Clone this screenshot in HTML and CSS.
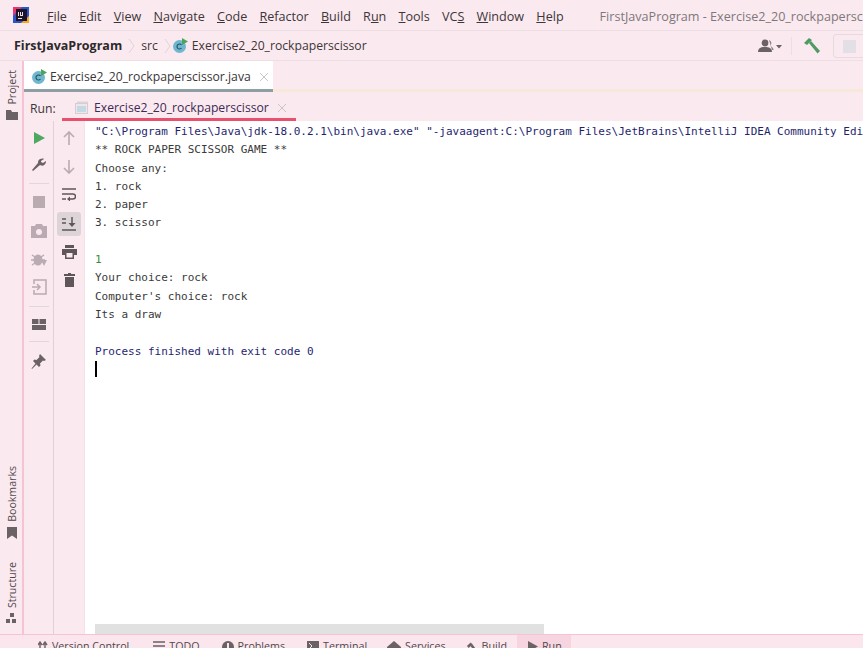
FILE: index.html
```html
<!DOCTYPE html>
<html lang="en">
<head>
    <meta charset="UTF-8">
    <title>FirstJavaProgram - Exercise2_20_rockpaperscissor</title>
    <link rel="stylesheet" href="styles.css">
</head>
<body>
    <div class="menubar">
        <svg class="logo" width="16" height="16" viewBox="0 0 16 16">
            <rect width="16" height="16" fill="#2b55c9"/>
            <path d="M0 0h9L0 9z" fill="#e8366f"/>
            <path d="M16 16H8l8-7z" fill="#f7a823"/>
            <rect x="3" y="2" width="11" height="12" fill="#1a1626"/>
            <rect x="5" y="5" width="1" height="4" fill="#f3d9e6"/>
            <rect x="7" y="5" width="3" height="4" fill="#f3d9e6"/>
            <rect x="8" y="5" width="1" height="3" fill="#1a1626"/>
            <rect x="5" y="11" width="4" height="1" fill="#f3d9e6"/>
        </svg>
        <nav class="menu">
            <span><u>F</u>ile</span>
            <span><u>E</u>dit</span>
            <span><u>V</u>iew</span>
            <span><u>N</u>avigate</span>
            <span><u>C</u>ode</span>
            <span><u>R</u>efactor</span>
            <span><u>B</u>uild</span>
            <span>R<u>u</u>n</span>
            <span><u>T</u>ools</span>
            <span>VC<u>S</u></span>
            <span><u>W</u>indow</span>
            <span><u>H</u>elp</span>
        </nav>
        <div class="title">FirstJavaProgram - Exercise2_20_rockpaperscissor</div>
    </div>

    <div class="navbar">
        <div class="crumbs">
            <b>FirstJavaProgram</b>
            <svg class="chev" width="7" height="16" viewBox="0 0 7 16"><path d="M1 1l5 7-5 7" fill="none" stroke="#dfd3d8"/></svg>
            <span>src</span>
            <svg class="chev" width="7" height="16" viewBox="0 0 7 16"><path d="M1 1l5 7-5 7" fill="none" stroke="#dfd3d8"/></svg>
            <svg class="crumb-icon" width="16" height="16" viewBox="0 0 16 16"><circle cx="7.500" cy="8.500" r="6.500" fill="#6fb6cf"/><path d="M9.500 7a2.500 2.500 0 1 0 0 3" fill="none" stroke="#25505f" stroke-width="1.100"/><path d="M10 0l6 3.500-6 3.500z" fill="#4fa35c"/></svg>
            <span class="crumb-file">Exercise2_20_rockpaperscissor</span>
        </div>
        <div class="nav-actions">
            <svg width="26" height="14" viewBox="0 0 26 14"><circle cx="9" cy="4" r="3.400" fill="#6b6266"/><path d="M2 13c0-4 3-5 7-5s7 1 7 5z" fill="#6b6266"/><path d="M13 1a3.400 3.400 0 0 1 1 6c2 .5 3.500 2 3.500 4h-1.500" fill="#8a8085"/><path d="M20 6h6l-3 3.500z" fill="#6b6266"/></svg>
            <i class="nav-sep"></i>
            <svg width="18" height="18" viewBox="0 0 18 18"><path d="M1 6l5-5 3 2-5 5z" fill="#4f9a63"/><path d="M6 6l2-2 9 10-2.500 2.500z" fill="#4f9a63"/></svg>
            <div class="run-config"><i></i></div>
        </div>
    </div>

    <div class="main">
        <aside class="stripe">
            <div class="stripe-group">
                <div class="stripe-item">
                    <span>Project</span>
                    <svg width="12" height="10" viewBox="0 0 12 10"><path d="M0 0h5l1 2h6v8H0z" fill="#6b6266"/></svg>
                </div>
            </div>
            <div class="stripe-group">
                <div class="stripe-item">
                    <span>Bookmarks</span>
                    <svg width="10" height="12" viewBox="0 0 10 12"><path d="M0 0h10v12L5 8.500 0 12z" fill="#6b6266"/></svg>
                </div>
                <div class="stripe-item stripe-structure">
                    <span>Structure</span>
                    <svg width="11" height="11" viewBox="0 0 11 11"><rect x="4" y="0" width="4" height="4" fill="#6b6266"/><rect x="0" y="6" width="4" height="4" fill="#6b6266"/><rect x="6" y="6" width="4" height="4" fill="#6b6266"/></svg>
                </div>
            </div>
        </aside>

        <div class="workspace">
            <div class="tabbar">
                <div class="tab">
                    <svg width="16" height="16" viewBox="0 0 16 16"><circle cx="7.500" cy="8.500" r="6.500" fill="#6fb6cf"/><path d="M9.500 7a2.500 2.500 0 1 0 0 3" fill="none" stroke="#25505f" stroke-width="1.100"/><path d="M10 0l6 3.500-6 3.500z" fill="#4fa35c"/></svg>
                    <span>Exercise2_20_rockpaperscissor.java</span>
                    <svg class="close" width="10" height="10" viewBox="0 0 10 10"><path d="M1 1l8 8M9 1l-8 8" stroke="#c9c4c6"/></svg>
                </div>
            </div>

            <div class="run-head">
                <span class="run-label">Run:</span>
                <div class="run-tab">
                    <svg width="14" height="13" viewBox="0 0 14 13"><rect x="2" y="0.500" width="11" height="2" fill="#ddd4d8"/><rect x="0.500" y="2.500" width="12" height="10" fill="#eee6ea" stroke="#d5cdd2"/><rect x="2" y="5" width="9" height="6" fill="#c4d9e4"/></svg>
                    <span>Exercise2_20_rockpaperscissor</span>
                    <svg class="close" width="10" height="10" viewBox="0 0 10 10"><path d="M1 1l8 8M9 1l-8 8" stroke="#c9c4c6"/></svg>
                </div>
            </div>

            <div class="run-body">
                <div class="tools tools-a">
                    <svg width="14" height="14" viewBox="0 0 14 14"><path d="M2 1l11 6-11 6z" fill="#4fa860"/></svg>
                    <svg class="gap-t" width="16" height="16" viewBox="0 0 16 16"><path d="M1 14l1 1 7-6c2 1 4 1 5-1 1-1 1-2 1-3l-3 2-2-1V5l3-2c-1-1-3 0-4 0-2 1-2 3-2 4z" fill="#6b6266"/></svg>
                    <i class="tool-sep"></i>
                    <svg class="dim" width="12" height="12" viewBox="0 0 12 12"><rect width="12" height="12" fill="#6b6266"/></svg>
                    <svg class="dim gap-c" width="16" height="14" viewBox="0 0 16 14"><path d="M0 2h4l1-2h6l1 2h4v12H0z" fill="#6b6266"/><circle cx="8" cy="8" r="3" fill="#fbeaf0"/></svg>
                    <svg class="dim gap-m" width="16" height="16" viewBox="0 0 16 16"><ellipse cx="7" cy="9" rx="4.500" ry="5.500" fill="#6b6266"/><path d="M1 4l3 2M13 4l-3 2M0 9h3M11 9h3M1 14l3-2" stroke="#6b6266" stroke-width="1.500"/><path d="M10 9h6l-3 6z" fill="#6b6266"/></svg>
                    <svg class="dim gap-s" width="16" height="16" viewBox="0 0 16 16"><path d="M3 5V1h12v14H3v-4" fill="none" stroke="#6b6266" stroke-width="1.500"/><path d="M1 8h7M6 5l3 3-3 3" fill="none" stroke="#6b6266" stroke-width="1.500"/></svg>
                    <i class="tool-sep"></i>
                    <svg width="14" height="11" viewBox="0 0 14 11"><rect width="6.500" height="5" fill="#6b6266"/><rect x="7.500" width="6.500" height="5" fill="#6b6266"/><rect y="6" width="14" height="5" fill="#6b6266"/></svg>
                    <i class="tool-sep"></i>
                    <svg width="15" height="15" viewBox="0 0 15 15"><path d="M9 0l6 6-2 1-1-.5-3 3 .5 2-1.500 1.500-2.500-2.500L1 15l-.5-.5 4-5L2 7l1.500-1.500 2 .5 3-3L8 2z" fill="#6b6266"/></svg>
                </div>
                <div class="tools tools-b">
                    <svg class="dim" width="12" height="14" viewBox="0 0 12 14"><path d="M6 14V2M1 6l5-5 5 5" fill="none" stroke="#6b6266" stroke-width="1.600"/></svg>
                    <svg class="dim gap-d" width="12" height="14" viewBox="0 0 12 14"><path d="M6 0v12M1 8l5 5 5-5" fill="none" stroke="#6b6266" stroke-width="1.600"/></svg>
                    <svg class="gap-e" width="14" height="13" viewBox="0 0 14 13"><path d="M0 1h14M0 6h11a2.500 2.500 0 0 1 0 5H7M0 11h4" fill="none" stroke="#5e565a" stroke-width="1.500"/><path d="M8 8.500v5L5 11z" fill="#5e565a"/></svg>
                    <div class="tool-active">
                        <svg width="14" height="14" viewBox="0 0 14 14"><path d="M0 2h4M0 6h4M0 13h14M10 0v8" fill="none" stroke="#5e565a" stroke-width="1.500"/><path d="M6.500 6h7L10 10z" fill="#5e565a"/></svg>
                    </div>
                    <svg class="gap-f" width="15" height="14" viewBox="0 0 15 14"><path d="M3 0h9v3H3zM0 4h15v6h-3v4H3v-4H0z" fill="#5e565a"/><rect x="4.500" y="8" width="6" height="4.500" fill="#fbeaf0"/></svg>
                    <svg class="gap-g" width="11" height="14" viewBox="0 0 11 14"><path d="M4 0h3v1h4v2H0V1h4zM1 4h9v10H1z" fill="#5e565a"/></svg>
                </div>
                <div class="console">
                    <pre class="out"><span class="sys">"C:\Program Files\Java\jdk-18.0.2.1\bin\java.exe" "-javaagent:C:\Program Files\JetBrains\IntelliJ IDEA Community Edition 2022.2\lib\idea_rt.jar"</span>
** ROCK PAPER SCISSOR GAME **
Choose any:
1. rock
2. paper
3. scissor

<span class="input">1</span>
Your choice: rock
Computer's choice: rock
Its a draw

<span class="sys">Process finished with exit code 0</span>
<i class="caret"></i></pre>
                    <div class="hscroll"></div>
                </div>
            </div>
        </div>
    </div>

    <div class="statusbar">
        <div class="st st-vcs"><svg width="10" height="11" viewBox="0 0 10 11"><path d="M2 11V2M0 4l2-3 2 3M7 11V2M5 4l2-3 2 3" fill="none" stroke="#6b6266" stroke-width="1.400"/></svg>Version Control</div>
        <div class="st"><svg width="12" height="10" viewBox="0 0 12 10"><path d="M0 1h12M0 5h12M0 9h12" stroke="#6b6266" stroke-width="1.500"/></svg>TODO</div>
        <div class="st"><svg width="12" height="12" viewBox="0 0 12 12"><circle cx="6" cy="6" r="6" fill="#6b6266"/><rect x="5" y="2" width="2" height="5" fill="#fbe6ed"/></svg>Problems</div>
        <div class="st st-term"><svg width="12" height="12" viewBox="0 0 12 12"><rect width="12" height="12" fill="#6b6266"/><path d="M2 2l3 3-3 3" fill="none" stroke="#fbe6ed"/></svg>Terminal</div>
        <div class="st st-term"><svg width="14" height="12" viewBox="0 0 14 12"><path d="M7 0l7 6v6H0V6z" fill="#6b6266"/></svg>Services</div>
        <div class="st"><svg width="12" height="12" viewBox="0 0 13 12"><path d="M1 5l4-4 2 2-4 4zM5 5l2-2 5 7-2 2z" fill="#6b6266"/></svg>Build</div>
        <div class="st st-on"><svg width="10" height="11" viewBox="0 0 10 11"><path d="M0 0l10 5.500L0 11z" fill="#6b6266"/></svg>Run</div>
    </div>
</body>
</html>
```

FILE: styles.css
```css
* {
    margin: 0;
    padding: 0;
    box-sizing: border-box;
}
body {
    width: 863px;
    height: 648px;
    overflow: hidden;
    display: flex;
    flex-direction: column;
    background-color: #fbe9f0;
    color: #3b3638;
    font-family: "Open Sans", "Noto Sans", sans-serif;
    font-size: 12.2px;
}
svg {
    flex: none;
    display: block;
}

/* top */
.menubar {
    height: 31px;
    flex: none;
    display: flex;
    align-items: center;
    padding: 2px 0 0 13px;
    border-bottom: 1px solid #ecdee3;
    white-space: nowrap;
    overflow: hidden;
    font-size: 12.6px;
}
.logo {
    margin-top: -2px;
}
.menu {
    display: flex;
    gap: 12.2px;
    margin-left: 18px;
}
.title {
    margin-left: 36px;
    color: #7d787a;
}
.navbar {
    height: 30px;
    flex: none;
    display: flex;
    align-items: center;
    justify-content: space-between;
    padding-left: 14px;
    border-bottom: 1px solid #eedfe4;
}
.crumbs {
    display: flex;
    align-items: center;
    gap: 6px;
}
.crumbs b {
    color: #2c2a2b;
    font-size: 12.5px;
}
.crumb-icon {
    margin-left: -5px;
}
.crumb-file {
    margin-left: -2px;
}
.nav-actions {
    display: flex;
    align-items: center;
}
.nav-sep {
    width: 1px;
    height: 18px;
    background-color: #ecdee3;
    margin: 0 11px 0 9px;
}
.run-config {
    width: 40px;
    height: 24px;
    margin: 0 -10px 0 12px;
    border: 1px solid #e6dade;
    border-radius: 3px;
    padding: 5px 9px;
}
.run-config i {
    display: block;
    width: 13px;
    height: 13px;
    background-color: #e3dfe6;
}

/* middle */
.main {
    flex: 1;
    display: flex;
    min-height: 0;
}
.stripe {
    width: 24px;
    flex: none;
    border-right: 2px solid #f5c3d3;
    display: flex;
    flex-direction: column;
    justify-content: space-between;
    padding: 9px 0 10px;
}
.stripe-item {
    display: flex;
    flex-direction: column;
    align-items: center;
    gap: 5px;
    font-size: 10.6px;
    padding-left: 1px;
}
.stripe-item span {
    writing-mode: vertical-rl;
    transform: rotate(180deg);
    color: #4e484b;
}
.stripe-structure {
    margin-top: 23px;
}
.workspace {
    flex: 1;
    min-width: 0;
    display: flex;
    flex-direction: column;
}
.tabbar {
    height: 31px;
    flex: none;
    border-bottom: 3px solid #f7e8da;
}
.tab {
    width: 249px;
    height: 31px;
    background-color: #fff;
    border-bottom: 3px solid #8f9ea5;
    display: flex;
    align-items: center;
    padding: 3px 0 0 7px;
    gap: 3px;
    white-space: nowrap;
}
.tab .close {
    margin-left: 5px;
}
.run-head {
    height: 29px;
    flex: none;
    display: flex;
    align-items: center;
}
.run-label {
    margin: 4px 0 0 6px;
    width: 32px;
}
.run-tab {
    width: 234px;
    height: 29px;
    display: flex;
    align-items: center;
    gap: 5px;
    padding: 5px 0 0 13px;
    border-bottom: 3px solid #e8506f;
    color: #3d2b55;
    white-space: nowrap;
}
.run-tab .close {
    margin-left: 3px;
}
.run-body {
    flex: 1;
    min-height: 0;
    display: flex;
}
.tools {
    flex: none;
    display: flex;
    flex-direction: column;
    align-items: center;
    padding-top: 10px;
}
.tools-a {
    width: 30px;
    border-right: 1px solid #dfd2d7;
}
.tools-b {
    width: 31px;
    border-right: 1px solid #f3e3e9;
}
.dim {
    opacity: .45;
}
.tool-sep {
    display: block;
    width: 20px;
    height: 1px;
    background-color: #e3d6db;
    margin: 11px 0 12px;
}
.tools-a .gap-t {
    margin-top: 11px;
}
.gap-c {
    margin-top: 16px;
}
.gap-m {
    margin-top: 13px;
}
.gap-s {
    margin-top: 12px;
}
.gap-d {
    margin-top: 15px;
}
.gap-e {
    margin-top: 14px;
}
.tool-active {
    width: 24px;
    height: 24px;
    margin-top: 11px;
    background-color: #dcd4d7;
    border-radius: 3px;
    display: flex;
    align-items: center;
    justify-content: center;
}
.gap-f {
    margin-top: 9px;
}
.gap-g {
    margin-top: 14px;
}
.console {
    flex: 1;
    min-width: 0;
    background-color: #fff;
    display: flex;
    flex-direction: column;
    justify-content: space-between;
    overflow: hidden;
    padding: 2px 0 0 10px;
}
.out {
    font-family: "DejaVu Sans Mono", "Liberation Mono", monospace;
    font-size: 11px;
    line-height: 18.3px;
    color: #3a3a3a;
    white-space: pre;
}
.sys {
    color: #1f1f70;
}
.input {
    color: #3a8a3a;
}
.caret {
    display: inline-block;
    width: 2px;
    height: 16px;
    background-color: #000;
    vertical-align: -3px;
}
.hscroll {
    width: 449px;
    height: 10px;
    background-color: #e1e1e1;
    flex: none;
}

/* bottom */
.statusbar {
    height: 14px;
    flex: none;
    display: flex;
    padding-left: 38px;
    background-color: #fbe6ed;
    border-top: 1px solid #f5c3d3;
    overflow: hidden;
    color: #4e484b;
    white-space: nowrap;
    font-size: 10.7px;
}
.st {
    display: flex;
    align-items: flex-start;
    gap: 4px;
    padding: 4px 0 0;
    margin-right: 22px;
}
.st-vcs {
    margin-right: 24px;
}
.st-term {
    margin-right: 20px;
}
.st svg {
    margin-top: 2px;
}
.st-on {
    background-color: #f7d5e0;
    padding: 4px 9px 0 11px;
    margin-left: -12px;
}
```
